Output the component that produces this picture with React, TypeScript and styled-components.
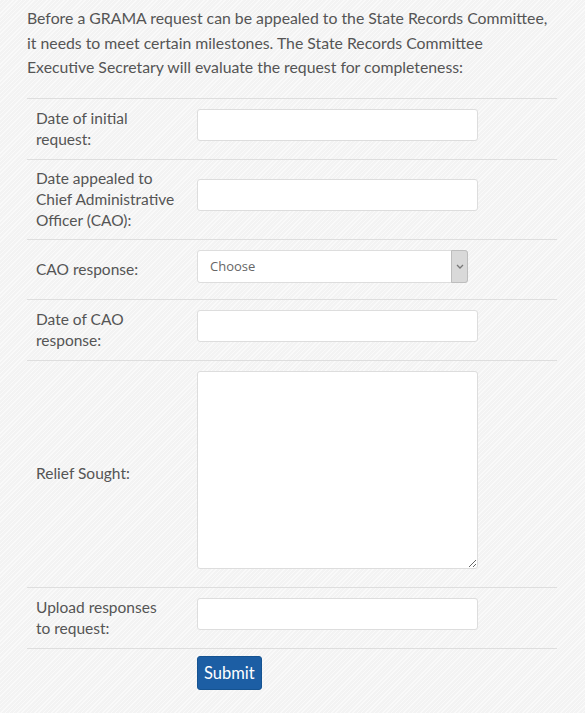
import styled, { createGlobalStyle } from 'styled-components';

const GlobalStyle = createGlobalStyle`
  html, body {
    margin: 0;
    padding: 0;
  }
  body {
    background-color: #f5f5f5;
    background-image: repeating-linear-gradient(
      135deg,
      rgba(255, 255, 255, 0.45) 0px,
      rgba(255, 255, 255, 0.45) 1px,
      rgba(0, 0, 0, 0.008) 1px,
      rgba(0, 0, 0, 0.008) 3px
    );
    font-family: Lato, 'Open Sans', sans-serif;
    color: #555;
  }
`;

const Page = styled.div`
  padding: 6px 28px 24px 27px;
  min-height: 713px;
  box-sizing: border-box;
`;

const Intro = styled.p`
  max-width: 530px;
  margin: 0 0 18px;
  font-size: 15.8px;
  line-height: 24.5px;
  color: #555;
`;

const Form = styled.form`
  display: flex;
  flex-direction: column;
`;

const Row = styled.div`
  display: flex;
  align-items: center;
  border-top: 1px solid #dedede;
  &:last-of-type {
    border-bottom: 1px solid #dedede;
  }
`;

const Label = styled.label`
  width: 170px;
  flex-shrink: 0;
  box-sizing: border-box;
  padding: 8px 16px 8px 9px;
  font-size: 15.5px;
  line-height: 21px;
  color: #555;
`;

const Field = styled.div`
  flex: 1;
  padding: 10px 0;
`;

const TextInput = styled.input`
  display: block;
  box-sizing: border-box;
  width: 281px;
  height: 32px;
  margin: 0 0 8px;
  border: 1px solid #ddd;
  border-radius: 3px;
  background: #fff;
  font: inherit;
  font-size: 14px;
  padding: 0 12px;
  outline: none;
`;

const SelectWrap = styled.div`
  position: relative;
  width: 271px;
  height: 33px;
  margin: 0 0 6px;
`;

const Select = styled.select`
  appearance: none;
  display: block;
  box-sizing: border-box;
  width: 100%;
  height: 100%;
  border: 1px solid #ddd;
  border-radius: 3px;
  background: #fff;
  font-family: 'Open Sans', Lato, sans-serif;
  font-size: 13px;
  color: #666;
  padding: 0 26px 0 12px;
  outline: none;
`;

const Caret = styled.span`
  position: absolute;
  top: 0;
  right: 0;
  bottom: 0;
  width: 17px;
  display: flex;
  align-items: center;
  justify-content: center;
  background: #d9d9d9;
  border: 1px solid #bdbdbd;
  border-radius: 0 3px 3px 0;
  box-sizing: border-box;
  pointer-events: none;
`;

const TextArea = styled.textarea`
  display: block;
  box-sizing: border-box;
  width: 281px;
  height: 198px;
  margin: 0 0 8px;
  border: 1px solid #ddd;
  border-radius: 3px;
  background: #fff;
  font: inherit;
  padding: 6px 12px;
  outline: none;
`;

const Actions = styled.div`
  padding: 7px 0 0 170px;
`;

const SubmitButton = styled.button`
  height: 34px;
  padding: 0 6px;
  border: 1px solid #155391;
  border-radius: 3px;
  background: #1c5ea4;
  color: #fff;
  font-family: Lato, 'Open Sans', sans-serif;
  font-size: 16.5px;
  cursor: pointer;
`;

export default function App() {
  return (
    <>
      <GlobalStyle />
      <Page>
        <Intro>
          Before a GRAMA request can be appealed to the State Records Committee,
          it&nbsp;needs to meet certain milestones. The State Records Committee
          Executive&nbsp;Secretary will evaluate the request for completeness:
        </Intro>
        <Form onSubmit={(e) => e.preventDefault()}>
          <div>
            <Row>
              <Label>Date of initial request:</Label>
              <Field>
                <TextInput type="text" />
              </Field>
            </Row>
            <Row>
              <Label>Date appealed to Chief Administrative Officer (CAO):</Label>
              <Field>
                <TextInput type="text" />
              </Field>
            </Row>
            <Row>
              <Label>CAO response:</Label>
              <Field>
                <SelectWrap>
                  <Select defaultValue="">
                    <option value="">Choose</option>
                    <option value="granted">Granted</option>
                    <option value="denied">Denied</option>
                    <option value="none">No response</option>
                  </Select>
                  <Caret>
                    <svg width="8" height="5" viewBox="0 0 8 5">
                      <path d="M1 1l3 3 3-3" fill="none" stroke="#777" strokeWidth="1.3" />
                    </svg>
                  </Caret>
                </SelectWrap>
              </Field>
            </Row>
            <Row>
              <Label>Date of CAO response:</Label>
              <Field>
                <TextInput type="text" />
              </Field>
            </Row>
            <Row>
              <Label>Relief Sought:</Label>
              <Field>
                <TextArea />
              </Field>
            </Row>
            <Row>
              <Label>Upload responses to&nbsp;request:</Label>
              <Field>
                <TextInput type="text" />
              </Field>
            </Row>
          </div>
          <Actions>
            <SubmitButton type="submit">Submit</SubmitButton>
          </Actions>
        </Form>
      </Page>
    </>
  );
}
